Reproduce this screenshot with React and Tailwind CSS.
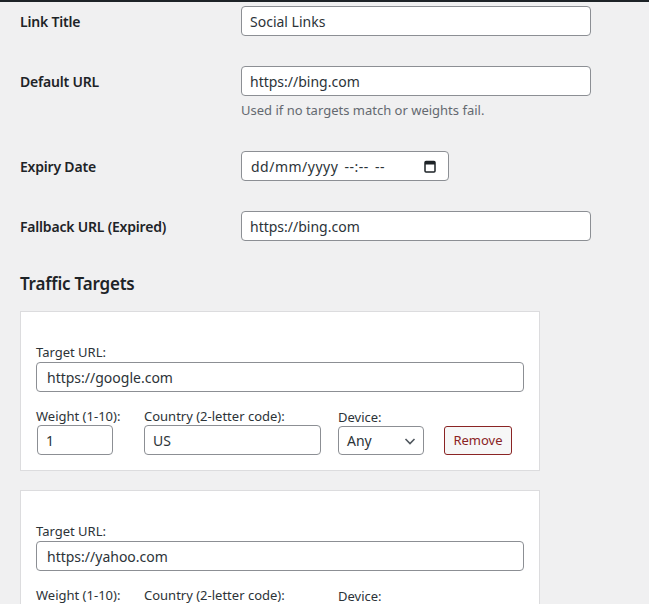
const font = { fontFamily: '"Noto Sans", "Liberation Sans", sans-serif' };

function TextBox({ value, className = "" }) {
  return (
    <div
      className={`flex h-[30px] items-center rounded-[4px] border border-[#8c8f94] bg-white px-2 text-[14px] text-[#2c3338] ${className}`}
    >
      {value}
    </div>
  );
}

function FieldRow({ label, children, pad = "py-[15px]" }) {
  return (
    <div className={`flex ${pad}`}>
      <div className="w-[221px] shrink-0 pt-[7px] text-[14px] font-semibold leading-[1.3] tracking-[-0.2px] text-[#1d2327]">
        {label}
      </div>
      <div className="flex-1">{children}</div>
    </div>
  );
}

function Chevron() {
  return (
    <svg width="14" height="14" viewBox="0 0 14 14" fill="none">
      <path d="M2.5 5 7 9.5 11.5 5" stroke="#50575e" strokeWidth="1.6" />
    </svg>
  );
}

function Calendar() {
  return (
    <svg width="12" height="13" viewBox="0 0 12 13" fill="none">
      <rect x="1" y="1.5" width="10" height="10.5" rx="1" stroke="#1d2327" strokeWidth="1.5" />
      <rect x="1" y="1.5" width="10" height="3" fill="#1d2327" />
    </svg>
  );
}

function TargetCard({ url }) {
  return (
    <div className="w-[520px] border border-[#dcdcde] bg-white px-[15px] pb-[15px] pt-[31px]">
      <div className="text-[13px] leading-[19px] text-[#2c3338]">Target URL:</div>
      <TextBox value={url} className="w-[488px] px-[10px]" />
      <div className="mt-[15px] flex items-end">
        <div className="w-[108px]">
          <div className="text-[13px] leading-[18px] text-[#2c3338]">Weight (1-10):</div>
          <TextBox value="1" className="ml-px h-[29px] w-[76px]" />
        </div>
        <div className="w-[194px]">
          <div className="text-[13px] leading-[18px] text-[#2c3338]">Country (2-letter code):</div>
          <TextBox value="US" className="h-[29px] w-[177px]" />
        </div>
        <div className="w-[106px]">
          <div className="text-[13px] leading-[18px] text-[#2c3338]">Device:</div>
          <div className="flex h-[29px] w-[86px] items-center justify-between rounded-[4px] border border-[#8c8f94] bg-white pl-2 pr-[6px] text-[14px] text-[#2c3338]">
            <span>Any</span>
            <Chevron />
          </div>
        </div>
        <button className="flex h-[29px] w-[68px] items-center justify-center rounded-[3px] border border-[#8a2424] bg-[#f6f7f7] text-[13px] text-[#8a2424]">
          Remove
        </button>
      </div>
    </div>
  );
}

export default function App() {
  return (
    <div className="h-[604px] w-[649px] overflow-hidden bg-[#f0f0f1]" style={font}>
      <div className="h-[2px] w-full bg-[#1d2327]" />
      <div className="px-[20px]">
        <FieldRow label="Link Title" pad="pt-[4px] pb-[15px]">
          <TextBox value="Social Links" className="w-[350px]" />
        </FieldRow>
        <FieldRow label="Default URL">
          <TextBox value="https://bing.com" className="w-[350px]" />
          <p className="mt-[4px] text-[13px] leading-[21px] text-[#646970]">
            Used if no targets match or weights fail.
          </p>
        </FieldRow>
        <FieldRow label="Expiry Date">
          <div className="flex h-[30px] w-[208px] items-center justify-between rounded-[4px] border border-[#8c8f94] bg-white pl-[9px] pr-[12px] text-[14px] text-[#2c3338]">
            <span className="tracking-[0.5px] [word-spacing:2px]">dd/mm/yyyy --:-- --</span>
            <Calendar />
          </div>
        </FieldRow>
        <FieldRow label="Fallback URL (Expired)">
          <TextBox value="https://bing.com" className="w-[350px]" />
        </FieldRow>
        <h2 className="mt-[17px] mb-[16px] text-[17px] font-semibold leading-[22px] tracking-[-0.2px] text-[#1d2327]">
          Traffic Targets
        </h2>
        <div className="flex flex-col gap-[19px]">
          <TargetCard url="https://google.com" />
          <TargetCard url="https://yahoo.com" />
        </div>
      </div>
    </div>
  );
}
